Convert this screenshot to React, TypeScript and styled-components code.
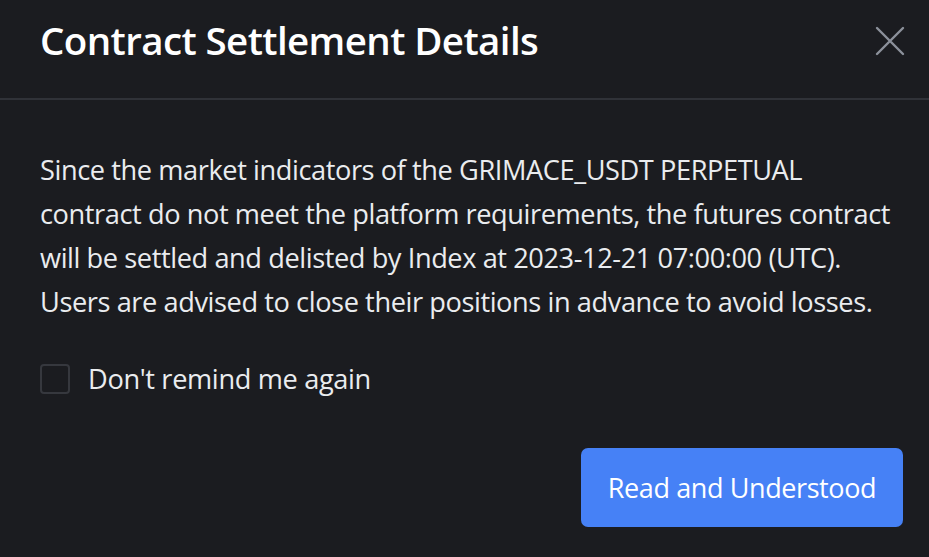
import React, { FC, useState } from "react";
import styled, { createGlobalStyle } from "styled-components";

const GlobalStyle = createGlobalStyle`
  html, body {
    margin: 0;
    padding: 0;
    background: #1b1c20;
  }
  body {
    font-family: "Open Sans", "Noto Sans", sans-serif;
  }
`;

const Dialog = styled.div`
  width: 929px;
  height: 557px;
  background: #1b1c20;
  color: #eaecef;
  display: flex;
  flex-direction: column;
  box-sizing: border-box;
`;

const Header = styled.div`
  height: 98px;
  border-bottom: 2px solid #303238;
  display: flex;
  align-items: center;
  justify-content: space-between;
  padding: 0 22px 0 40px;
  box-sizing: content-box;
`;

const Title = styled.h2`
  margin: 0 0 18px;
  font-size: 38.5px;
  font-weight: 600;
  color: #ffffff;
  letter-spacing: -0.6px;
`;

const CloseButton = styled.button`
  width: 34px;
  height: 34px;
  margin-bottom: 16px;
  padding: 0;
  border: none;
  background: transparent;
  cursor: pointer;
  display: flex;
  align-items: center;
  justify-content: center;
`;

const Body = styled.div`
  flex: 1;
  padding: 48px 40px 30px;
  display: flex;
  flex-direction: column;
`;

const Message = styled.p`
  margin: 0;
  font-size: 27.2px;
  line-height: 44px;
  color: #eaecef;
  letter-spacing: -0.42px;
  white-space: nowrap;
`;

const CheckRow = styled.label`
  margin-top: 36px;
  display: flex;
  align-items: center;
  gap: 18px;
  cursor: pointer;
  font-size: 27.2px;
  color: #eaecef;
  letter-spacing: -0.35px;
`;

const Box = styled.span<{ checked: boolean }>`
  width: 30px;
  height: 30px;
  box-sizing: border-box;
  border: 2px solid #36383e;
  border-radius: 4px;
  background: ${p => (p.checked ? "#4681f6" : "transparent")};
  display: flex;
  align-items: center;
  justify-content: center;
`;

const Footer = styled.div`
  margin-top: auto;
  display: flex;
  justify-content: flex-end;
`;

const PrimaryButton = styled.button`
  width: 322px;
  height: 79px;
  margin-right: -14px;
  border: none;
  border-radius: 7px;
  background: #4681f6;
  color: #ffffff;
  font-family: inherit;
  font-size: 27px;
  letter-spacing: -0.4px;
  cursor: pointer;
`;

const App: FC = () => {
  const [checked, setChecked] = useState(false);

  return (
    <>
      <GlobalStyle />
      <Dialog>
        <Header>
          <Title>Contract Settlement Details</Title>
          <CloseButton aria-label="close">
            <svg width="32" height="32" viewBox="0 0 32 32" fill="none" stroke="#8c919b" strokeWidth="2.4" strokeLinecap="round">
              <path d="M3 3 L29 29 M29 3 L3 29" />
            </svg>
          </CloseButton>
        </Header>
        <Body>
          <Message>
            Since the market indicators of the GRIMACE_USDT PERPETUAL
            <br />
            contract do not meet the platform requirements, the futures contract
            <br />
            will be settled and delisted by Index at 2023-12-21 07:00:00 (UTC).
            <br />
            Users are advised to close their positions in advance to avoid losses.
          </Message>
          <CheckRow onClick={() => setChecked(!checked)}>
            <Box checked={checked}>
              {checked && (
                <svg width="18" height="18" viewBox="0 0 18 18" fill="none" stroke="#fff" strokeWidth="2.4">
                  <path d="M3 9 L7.5 13.5 L15 5" />
                </svg>
              )}
            </Box>
            Don't remind me again
          </CheckRow>
          <Footer>
            <PrimaryButton>Read and Understood</PrimaryButton>
          </Footer>
        </Body>
      </Dialog>
    </>
  );
};

export default App;
